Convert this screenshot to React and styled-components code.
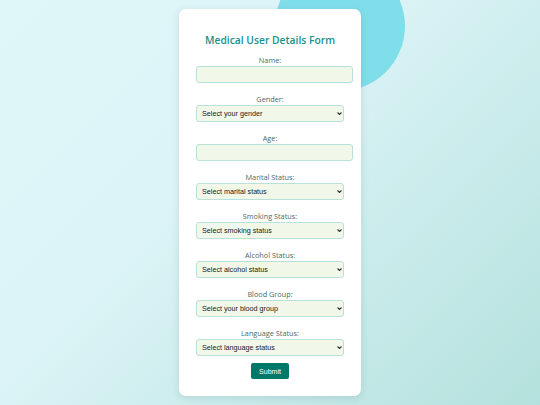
import styled, { createGlobalStyle } from "styled-components";

const GlobalStyle = createGlobalStyle`
  html, body {
    margin: 0;
    padding: 0;
  }
  body {
    font-family: "Open Sans", "Noto Sans", sans-serif;
  }
`;

const Page = styled.div`
  position: relative;
  width: 100%;
  height: 405px;
  overflow: hidden;
  display: flex;
  align-items: center;
  justify-content: center;
  background: linear-gradient(135deg, #e0f7fa 0%, #dcf4f7 40%, #b4e1dd 100%);
`;

const Bubble = styled.div`
  position: absolute;
  top: -39px;
  left: 275px;
  width: 130px;
  height: 130px;
  border-radius: 50%;
  background-color: #80deea;
`;

const Card = styled.form`
  position: relative;
  z-index: 1;
  width: 148px;
  padding: 17px;
  background-color: #ffffff;
  border-radius: 7px;
  box-shadow: 0 2px 8px rgba(0, 60, 60, 0.12);
  display: flex;
  flex-direction: column;
`;

const Title = styled.h2`
  margin: 6px 0 7px;
  font-size: 10.3px;
  line-height: 16px;
  font-weight: 600;
  color: #17918a;
  text-align: center;
  white-space: nowrap;
`;

const Group = styled.div`
  display: flex;
  flex-direction: column;
  margin-bottom: ${(props) => (props.last ? "7px" : "11px")};
`;

const Label = styled.label`
  display: block;
  margin-bottom: 1px;
  font-size: 7.3px;
  line-height: 10px;
  color: #4a6a66;
  text-align: center;
`;

const TextInput = styled.input`
  display: block;
  box-sizing: border-box;
  width: calc(100% + 9px);
  height: 17px;
  margin: 0;
  padding: 0 5px;
  border: 1px solid #b9e0d9;
  border-radius: 3px;
  background-color: #f1f8e9;
  font-family: "Liberation Sans", Arial, sans-serif;
  font-size: 7px;
  outline: none;
`;

const SelectWrap = styled.div`
  position: relative;
  width: 100%;
  height: 17px;
`;

const Select = styled.select`
  display: block;
  appearance: none;
  box-sizing: border-box;
  width: 100%;
  height: 17px;
  margin: 0;
  padding: 0 10px 0 5px;
  border: 1px solid #b9e0d9;
  border-radius: 3px;
  background-color: #f1f8e9;
  color: #1a1a1a;
  font-family: "Liberation Sans", Arial, sans-serif;
  font-size: 7.2px;
  line-height: 15px;
  outline: none;
`;

const Caret = styled.svg`
  position: absolute;
  right: 2px;
  top: 7px;
  width: 5px;
  height: 3px;
  pointer-events: none;
`;

const SubmitButton = styled.button`
  align-self: center;
  width: 38px;
  height: 16px;
  padding: 0;
  border: none;
  border-radius: 2px;
  background-color: #00796b;
  color: #ffffff;
  font-family: "Liberation Sans", Arial, sans-serif;
  font-size: 7px;
  cursor: pointer;
`;

const fields = [
  { id: "name", label: "Name:", type: "text" },
  { id: "gender", label: "Gender:", placeholder: "Select your gender" },
  { id: "age", label: "Age:", type: "number" },
  { id: "marital", label: "Marital Status:", placeholder: "Select marital status" },
  { id: "smoking", label: "Smoking Status:", placeholder: "Select smoking status" },
  { id: "alcohol", label: "Alcohol Status:", placeholder: "Select alcohol status" },
  { id: "blood", label: "Blood Group:", placeholder: "Select your blood group" },
  { id: "language", label: "Language Status:", placeholder: "Select language status" },
];

function App() {
  return (
    <>
      <GlobalStyle />
      <Page>
        <Bubble />
        <Card onSubmit={(e) => e.preventDefault()}>
          <Title>Medical User Details Form</Title>
          {fields.map((field, i) => (
            <Group key={field.id} last={i === fields.length - 1}>
              <Label htmlFor={field.id}>{field.label}</Label>
              {field.type ? (
                <TextInput id={field.id} type={field.type} />
              ) : (
                <SelectWrap>
                  <Select id={field.id} defaultValue="">
                    <option value="">{field.placeholder}</option>
                  </Select>
                  <Caret viewBox="0 0 5 3">
                    <path d="M0.5 0.5 L2.5 2.5 L4.5 0.5" fill="none" stroke="#333" strokeWidth="1.1" />
                  </Caret>
                </SelectWrap>
              )}
            </Group>
          ))}
          <SubmitButton type="submit">Submit</SubmitButton>
        </Card>
      </Page>
    </>
  );
}

export default App;
